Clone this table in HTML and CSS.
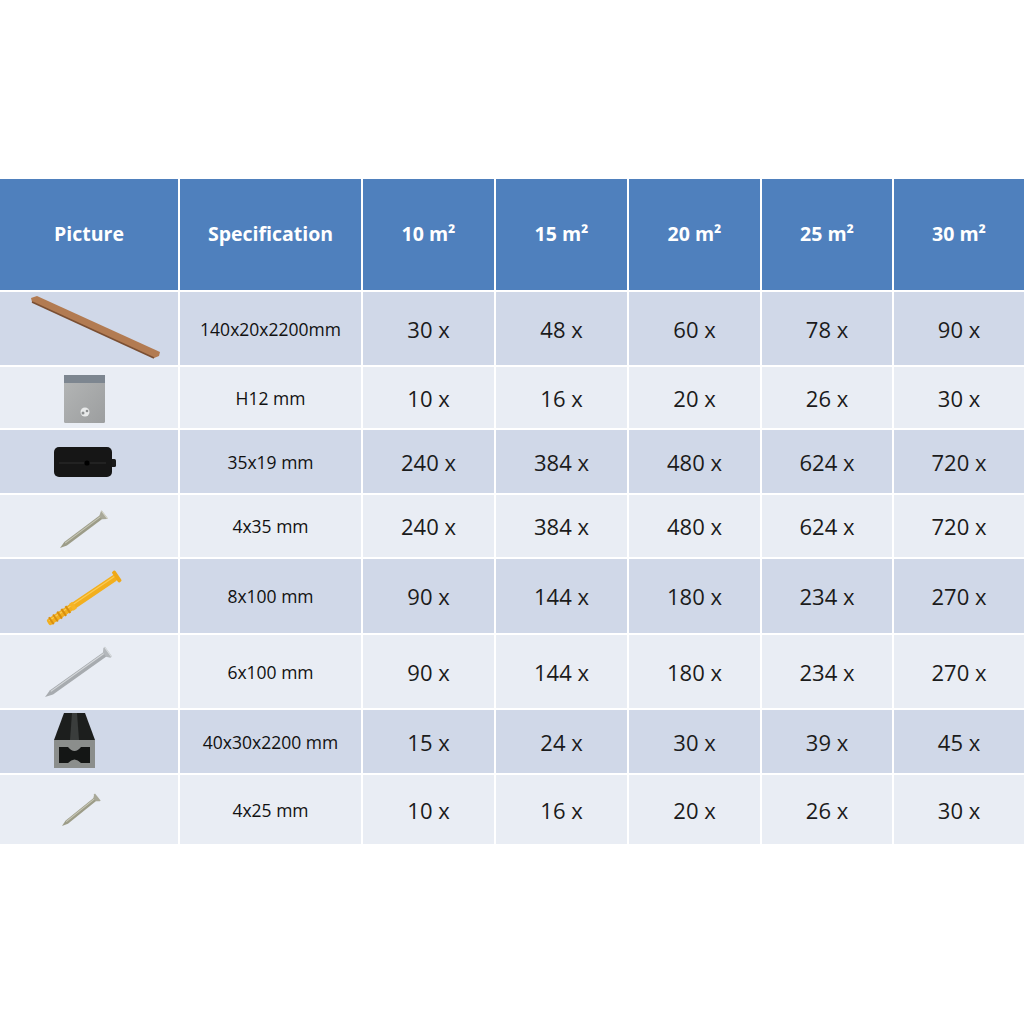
FILE: index.html
```html
<!DOCTYPE html>
<html>
<head>
<meta charset="utf-8">
<link rel="stylesheet" href="styles.css">
</head>
<body>
<div class="page">
  <div class="grid">
    <div class="hd">Picture</div>
    <div class="hd">Specification</div>
    <div class="hd">10 m²</div>
    <div class="hd">15 m²</div>
    <div class="hd">20 m²</div>
    <div class="hd">25 m²</div>
    <div class="hd">30 m²</div>

    <div class="c dark pic r1"><svg width="178" height="73" viewBox="0 0 178 73"><polygon points="31,6 37,4 160,60 159,64 154,66 32,10" fill="#B27B52"/><line x1="32" y1="10" x2="154" y2="66" stroke="#7A4F33" stroke-width="1.6"/></svg></div>
    <div class="c dark spec">140x20x2200mm</div>
    <div class="c dark num">30 x</div><div class="c dark num">48 x</div><div class="c dark num">60 x</div><div class="c dark num">78 x</div><div class="c dark num">90 x</div>

    <div class="c light pic r2"><svg width="178" height="61" viewBox="0 0 178 61"><defs><linearGradient id="gclip" x1="0" y1="0" x2="1" y2="1"><stop offset="0" stop-color="#B4B6B6"/><stop offset="1" stop-color="#9C9E9F"/></linearGradient></defs><rect x="64" y="8" width="41" height="48" rx="1.5" fill="url(#gclip)"/><rect x="64" y="8" width="41" height="8" fill="#7D8690"/><circle cx="85" cy="45" r="4.5" fill="#E8EAEA"/><circle cx="83" cy="46" r="1.5" fill="#8C8F90"/><circle cx="87" cy="44" r="1.3" fill="#8C8F90"/></svg></div>
    <div class="c light spec">H12 mm</div>
    <div class="c light num">10 x</div><div class="c light num">16 x</div><div class="c light num">20 x</div><div class="c light num">26 x</div><div class="c light num">30 x</div>

    <div class="c dark pic r3"><svg width="178" height="63" viewBox="0 0 178 63"><rect x="110" y="29" width="6" height="8" rx="1.5" fill="#1A1A1A"/><rect x="54" y="17" width="58" height="30" rx="5" fill="#161616"/><line x1="59" y1="33" x2="106" y2="33" stroke="#222222" stroke-width="2"/><circle cx="87" cy="33" r="2.6" fill="#000"/></svg></div>
    <div class="c dark spec">35x19 mm</div>
    <div class="c dark num">240 x</div><div class="c dark num">384 x</div><div class="c dark num">480 x</div><div class="c dark num">624 x</div><div class="c dark num">720 x</div>

    <div class="c light pic r4"><svg width="178" height="62" viewBox="0 0 178 62"><g transform="translate(60,53) rotate(-36.9)"><polygon points="0,0 7,-2.2 52,-2.2 52,2.2 7,2.2" fill="#9C9C88"/><line x1="7" y1="-0.8" x2="52" y2="-0.8" stroke="#C9C9B8" stroke-width="1"/><polygon points="51,-2.2 55,-5 56,-5 56,5 55,5 51,2.2" fill="#A8A898"/><line x1="55.5" y1="-5" x2="55.5" y2="5" stroke="#D6D6CA" stroke-width="1"/></g></svg></div>
    <div class="c light spec">4x35 mm</div>
    <div class="c light num">240 x</div><div class="c light num">384 x</div><div class="c light num">480 x</div><div class="c light num">624 x</div><div class="c light num">720 x</div>

    <div class="c dark pic r5"><svg width="178" height="74" viewBox="0 0 178 74"><g transform="translate(48,64) rotate(-34.06)"><rect x="0" y="-3.4" width="82" height="6.8" rx="2" fill="#F2AF1E"/><line x1="2" y1="-1.4" x2="82" y2="-1.4" stroke="#FBCB55" stroke-width="1.2"/><rect x="81" y="-6.5" width="4" height="13" rx="1.5" fill="#EFA817"/><g fill="#D88E0E"><rect x="3" y="-4.2" width="2" height="8.4"/><rect x="8" y="-4.2" width="2" height="8.4"/><rect x="13" y="-4.2" width="2" height="8.4"/><rect x="18" y="-4.2" width="2" height="8.4"/><rect x="23" y="-4.2" width="2" height="8.4"/></g><rect x="28" y="-4" width="4" height="8" fill="#F6B526"/></g></svg></div>
    <div class="c dark spec">8x100 mm</div>
    <div class="c dark num">90 x</div><div class="c dark num">144 x</div><div class="c dark num">180 x</div><div class="c dark num">234 x</div><div class="c dark num">270 x</div>

    <div class="c light pic r6"><svg width="178" height="73" viewBox="0 0 178 73"><g transform="translate(45,62) rotate(-35.5)"><polygon points="0,0 8,-2.6 74,-2.6 74,2.6 8,2.6" fill="#A7ABAF"/><line x1="8" y1="-1.2" x2="74" y2="-1.2" stroke="#D4D7DA" stroke-width="1.2"/><polygon points="73,-2.6 76,-6 78,-6 78,6 76,6 73,2.6" fill="#B3B7BB"/><line x1="77.5" y1="-6" x2="77.5" y2="6" stroke="#DADDE0" stroke-width="1"/></g></svg></div>
    <div class="c light spec">6x100 mm</div>
    <div class="c light num">90 x</div><div class="c light num">144 x</div><div class="c light num">180 x</div><div class="c light num">234 x</div><div class="c light num">270 x</div>

    <div class="c dark pic r7"><svg width="178" height="63" viewBox="0 0 178 63"><polygon points="64,3 85,3 95,30 54,30" fill="#1C1E1D"/><polygon points="72,3 77,3 79,30 70,30" fill="#3A3D3C"/><rect x="54" y="30" width="41" height="28" fill="#8B8E8C"/><path d="M59,37 L68,37 Q74.5,45 81,37 L90,37 L90,53 L81,53 Q74.5,46 68,53 L59,53 Z" fill="#141615"/></svg></div>
    <div class="c dark spec">40x30x2200 mm</div>
    <div class="c dark num">15 x</div><div class="c dark num">24 x</div><div class="c dark num">30 x</div><div class="c dark num">39 x</div><div class="c dark num">45 x</div>

    <div class="c light pic r8"><svg width="178" height="69" viewBox="0 0 178 69"><g transform="translate(62,51) rotate(-38.9)"><polygon points="0,0 6,-2 43,-2 43,2 6,2" fill="#9C9C88"/><line x1="6" y1="-0.7" x2="43" y2="-0.7" stroke="#C9C9B8" stroke-width="1"/><polygon points="42,-2 45,-4.5 46,-4.5 46,4.5 45,4.5 42,2" fill="#A8A898"/></g></svg></div>
    <div class="c light spec">4x25 mm</div>
    <div class="c light num">10 x</div><div class="c light num">16 x</div><div class="c light num">20 x</div><div class="c light num">26 x</div><div class="c light num">30 x</div>
  </div>
</div>
</body>
</html>
```

FILE: styles.css
```css
html, body {
  margin: 0;
  padding: 0;
  background: #ffffff;
}

.page {
  width: 1024px;
  height: 1024px;
  padding-top: 179px;
  box-sizing: border-box;
  font-family: "Open Sans", "Noto Sans", sans-serif;
}

.grid {
  display: grid;
  grid-template-columns: 178px 181px 131px 131px 131px 130px 130px;
  grid-template-rows: 111px 73px 61px 63px 62px 74px 73px 63px 69px;
  gap: 2px;
}

.hd {
  background: #4F80BD;
  color: #ffffff;
  font-weight: 700;
  font-size: 19.5px;
  display: flex;
  align-items: center;
  justify-content: center;
  padding-bottom: 2px;
  box-sizing: border-box;
}

.c {
  display: flex;
  align-items: center;
  justify-content: center;
  color: #1b1b1b;
  overflow: hidden;
}

.dark {
  background: #D0D8E8;
}

.light {
  background: #E9EDF4;
}

.spec {
  font-size: 17.5px;
  font-weight: 400;
  color: #111111;
}

.num {
  font-size: 22px;
}

.pic svg {
  display: block;
}
```
